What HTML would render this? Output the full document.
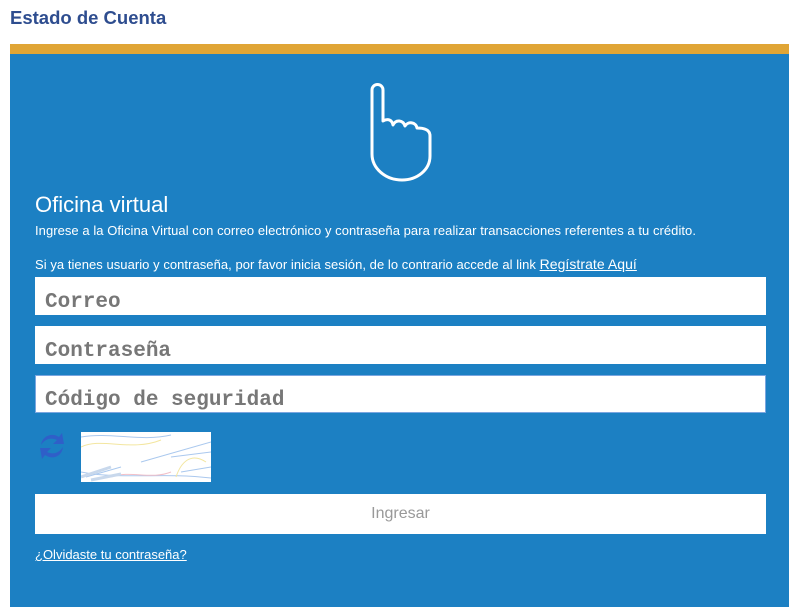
<!DOCTYPE html>
<html><head><meta charset="utf-8"><style>
body{margin:0;width:789px;height:607px;background:#fff;font-family:"Liberation Sans",sans-serif;position:relative;overflow:hidden}
.t{position:absolute;left:10px;top:7px;font-size:18.5px;font-weight:bold;color:#2e4d8f}
.gold{position:absolute;left:10px;top:44px;width:779px;height:10px;background:#e0a535}
.panel{position:absolute;left:10px;top:54px;width:779px;height:553px;background:#1c80c3}
.a{position:absolute;color:#fff}
.in{position:absolute;left:35px;width:731px;background:#fff;height:38px;font-family:"Liberation Mono",monospace;font-weight:bold;font-size:21px;color:#777;box-sizing:border-box;padding-left:10px;line-height:52px;overflow:hidden}
</style></head><body>
<div class="t">Estado de Cuenta</div>
<div class="gold"></div>
<div class="panel"></div>
<svg style="position:absolute;left:368px;top:82px" width="66" height="100" viewBox="0 0 66 100"><path d="M4 8 a5.5 5.5 0 0 1 11 0 V39 c5-3 9-1 10 4 c3-6 10-5 12 1 c3-5 11-4 12 2 c6 0 13 1 13 8 V74 c0 14-13 24-28 24 c-17 0-30-12-30-26 Z" fill="none" stroke="#fff" stroke-width="3" stroke-linejoin="round"/></svg>
<div class="a" style="left:35px;top:192px;font-size:22px">Oficina virtual</div>
<div class="a" style="left:35px;top:223px;font-size:13px;letter-spacing:0.05px">Ingrese a la Oficina Virtual con correo electrónico y contraseña para realizar transacciones referentes a tu crédito.</div>
<div class="a" style="left:35px;top:256px;font-size:13px;letter-spacing:0.05px">Si ya tienes usuario y contraseña, por favor inicia sesión, de lo contrario accede al link <span style="font-size:14px;text-decoration:underline">Regístrate Aquí</span></div>
<div class="in" style="top:277px">Correo</div>
<div class="in" style="top:326px">Contraseña</div>
<div class="in" style="top:375px;border:1px solid #7aa6e0;padding-left:9px;line-height:50px">Código de seguridad</div>
<svg style="position:absolute;left:38px;top:430px" width="28" height="32" viewBox="0 0 28 32"><path d="M3 15 C4 6 14 2 21 7 L24 3 L26 14 L15 14 L19 10 C13 7 7 9 3 15Z" fill="#2f5fc8"/><path d="M25 17 C24 27 14 30 7 25 L4 29 L2 18 L13 18 L9 22 C15 25 21 23 25 17Z" fill="#2f5fc8"/></svg>
<svg style="position:absolute;left:81px;top:432px" width="130" height="50"><rect width="130" height="50" fill="#fff"/><path d="M0 5 C30 0 60 10 90 3 M0 40 C40 48 80 40 130 46 M60 30 L130 10 M90 25 L130 20 M5 45 L40 35 M100 40 L130 35" stroke="#aac8ee" fill="none"/><path d="M0 15 C20 5 50 20 80 8 M95 45 C100 30 110 20 125 30" stroke="#f3e6a0" fill="none"/><path d="M30 45 C50 38 70 48 90 40" stroke="#f2c0c8" fill="none"/><path d="M0 45 L30 35 M10 48 L40 42" stroke="#c8d8ec" stroke-width="3" fill="none"/></svg>
<div style="position:absolute;left:35px;top:494px;width:731px;height:40px;background:#fff;color:#999;font-size:16px;text-align:center;line-height:40px">Ingresar</div>
<div class="a" style="left:35px;top:547px;font-size:13px;text-decoration:underline">¿Olvidaste tu contraseña?</div>
</body></html>
